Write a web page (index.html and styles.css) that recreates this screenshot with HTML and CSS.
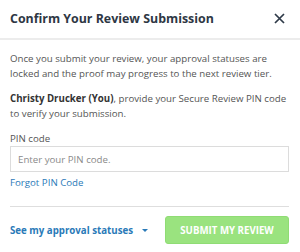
FILE: index.html
```html
<!DOCTYPE html>
<html>
<head>
<meta charset="utf-8">
<link rel="stylesheet" href="styles.css">
</head>
<body>
<div class="modal">
  <div class="header">
    <h1 class="title">Confirm Your Review Submission</h1>
    <button class="close" aria-label="Close">
      <svg width="11" height="11" viewBox="0 0 11 11"><path d="M1 1L10 10M10 1L1 10" stroke="#2e3a48" stroke-width="1.7" fill="none"/></svg>
    </button>
  </div>
  <div class="body">
    <p class="text">Once you submit your review, your approval statuses are locked and the proof may progress to the next review tier.</p>
    <p class="text"><strong>Christy Drucker (You)</strong>, provide your Secure Review PIN code to verify your submission.</p>
    <label class="label">PIN code</label>
    <input class="input" type="text" placeholder="Enter your PIN code.">
    <a class="link" href="#">Forgot PIN Code</a>
  </div>
  <div class="footer">
    <a class="statuses" href="#">See my approval statuses <span class="caret"></span></a>
    <button class="submit">SUBMIT MY REVIEW</button>
  </div>
</div>
</body>
</html>
```
FILE: styles.css
```css
* { box-sizing: border-box; }
html, body { margin: 0; padding: 0; background: #fff; }
body { font-family: "Open Sans", sans-serif; width: 300px; height: 252px; overflow: hidden; }
.modal { width: 300px; }
.header { display: flex; align-items: center; justify-content: space-between; height: 40px; padding: 0 15px 2px 10px; border-bottom: 2px solid #ececec; }
.title { margin: 0; font-size: 12.4px; font-weight: 700; color: #2e3744; }
.close { border: 0; background: none; padding: 0; width: 11px; height: 11px; display: flex; }
.body { padding: 11px 11px 0 10px; }
.text { margin: 0 -6px 10px 0; font-size: 9.7px; line-height: 15px; color: #555; }
.text strong { color: #333; font-weight: 700; }
.label { display: block; font-size: 9.7px; color: #555; line-height: 15px; margin-top: 8px; }
.input { display: block; width: 279px; height: 26px; margin: 0; border: 1px solid #dcdcdc; padding: 0 7px; font-family: "Open Sans", sans-serif; font-size: 9.7px; color: #555; outline: none; }
.input::placeholder { color: #8a8a8a; }
.link { display: block; font-size: 9.7px; color: #2a7ab8; text-decoration: none; margin-top: 3px; line-height: 15px; }
.footer { margin: 16px 11px 0 10px; border-top: 1px solid #dedede; display: flex; align-items: center; justify-content: space-between; padding-top: 9px; }
.statuses { font-size: 9.7px; font-weight: 700; color: #2a7ab8; text-decoration: none; display: flex; align-items: center; }
.caret { display: inline-block; margin-left: 9px; width: 0; height: 0; border-left: 3.5px solid transparent; border-right: 3.5px solid transparent; border-top: 3.5px solid #2a7ab8; }
.submit { width: 124px; height: 28px; background: #9ae37f; border: 1px solid #8fdc74; border-radius: 3px; color: #fff; font-family: "Open Sans", sans-serif; font-weight: 700; font-size: 9.7px; padding: 0; }
```
